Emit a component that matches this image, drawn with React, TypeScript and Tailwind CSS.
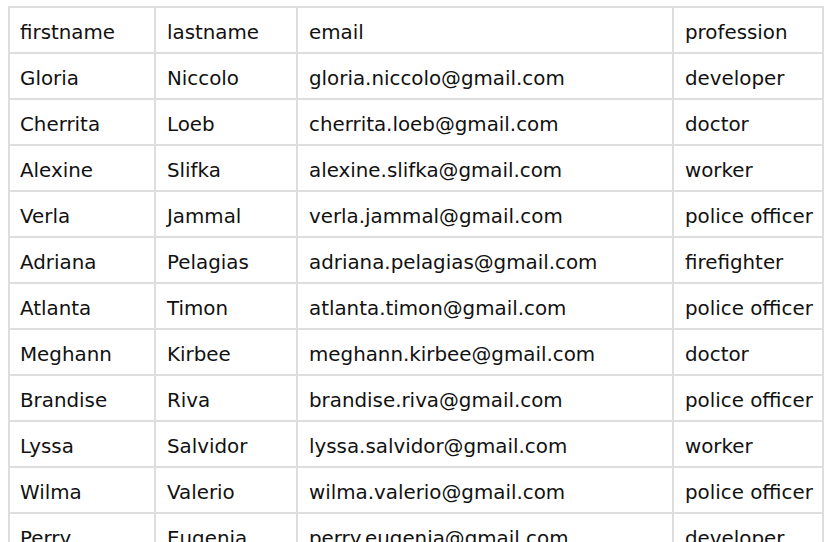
const people = [
  ["Gloria", "Niccolo", "gloria.niccolo@gmail.com", "developer"],
  ["Cherrita", "Loeb", "cherrita.loeb@gmail.com", "doctor"],
  ["Alexine", "Slifka", "alexine.slifka@gmail.com", "worker"],
  ["Verla", "Jammal", "verla.jammal@gmail.com", "police officer"],
  ["Adriana", "Pelagias", "adriana.pelagias@gmail.com", "firefighter"],
  ["Atlanta", "Timon", "atlanta.timon@gmail.com", "police officer"],
  ["Meghann", "Kirbee", "meghann.kirbee@gmail.com", "doctor"],
  ["Brandise", "Riva", "brandise.riva@gmail.com", "police officer"],
  ["Lyssa", "Salvidor", "lyssa.salvidor@gmail.com", "worker"],
  ["Wilma", "Valerio", "wilma.valerio@gmail.com", "police officer"],
  ["Perry", "Eugenia", "perry.eugenia@gmail.com", "developer"],
  ["Lorie", "Ranjan", "lorie.ranjan@gmail.com", "doctor"],
];

const cell = "border-2 border-[#dddddd] pl-[11px] pr-[8px] pt-[13px] pb-[7px] leading-[24px] text-left font-normal whitespace-nowrap first:pl-[10px]";

export default function App() {
  return (
    <div className="h-[542px] overflow-hidden bg-white pt-[6px] pl-[8px] text-[19.85px] text-[#111111] [font-family:'DejaVu_Sans',Verdana,sans-serif]">
      <table className="w-[814px] table-fixed border-collapse">
        <colgroup>
          <col className="w-[146px]" />
          <col className="w-[142px]" />
          <col className="w-[376px]" />
          <col className="w-[150px]" />
        </colgroup>
        <thead>
          <tr>
            <th className={cell}>firstname</th>
            <th className={cell}>lastname</th>
            <th className={cell}>email</th>
            <th className={cell}>profession</th>
          </tr>
        </thead>
        <tbody>
          {people.map((p) => (
            <tr key={p[2]}>
              {p.map((v, i) => (
                <td key={i} className={cell}>
                  {v}
                </td>
              ))}
            </tr>
          ))}
        </tbody>
      </table>
    </div>
  );
}
